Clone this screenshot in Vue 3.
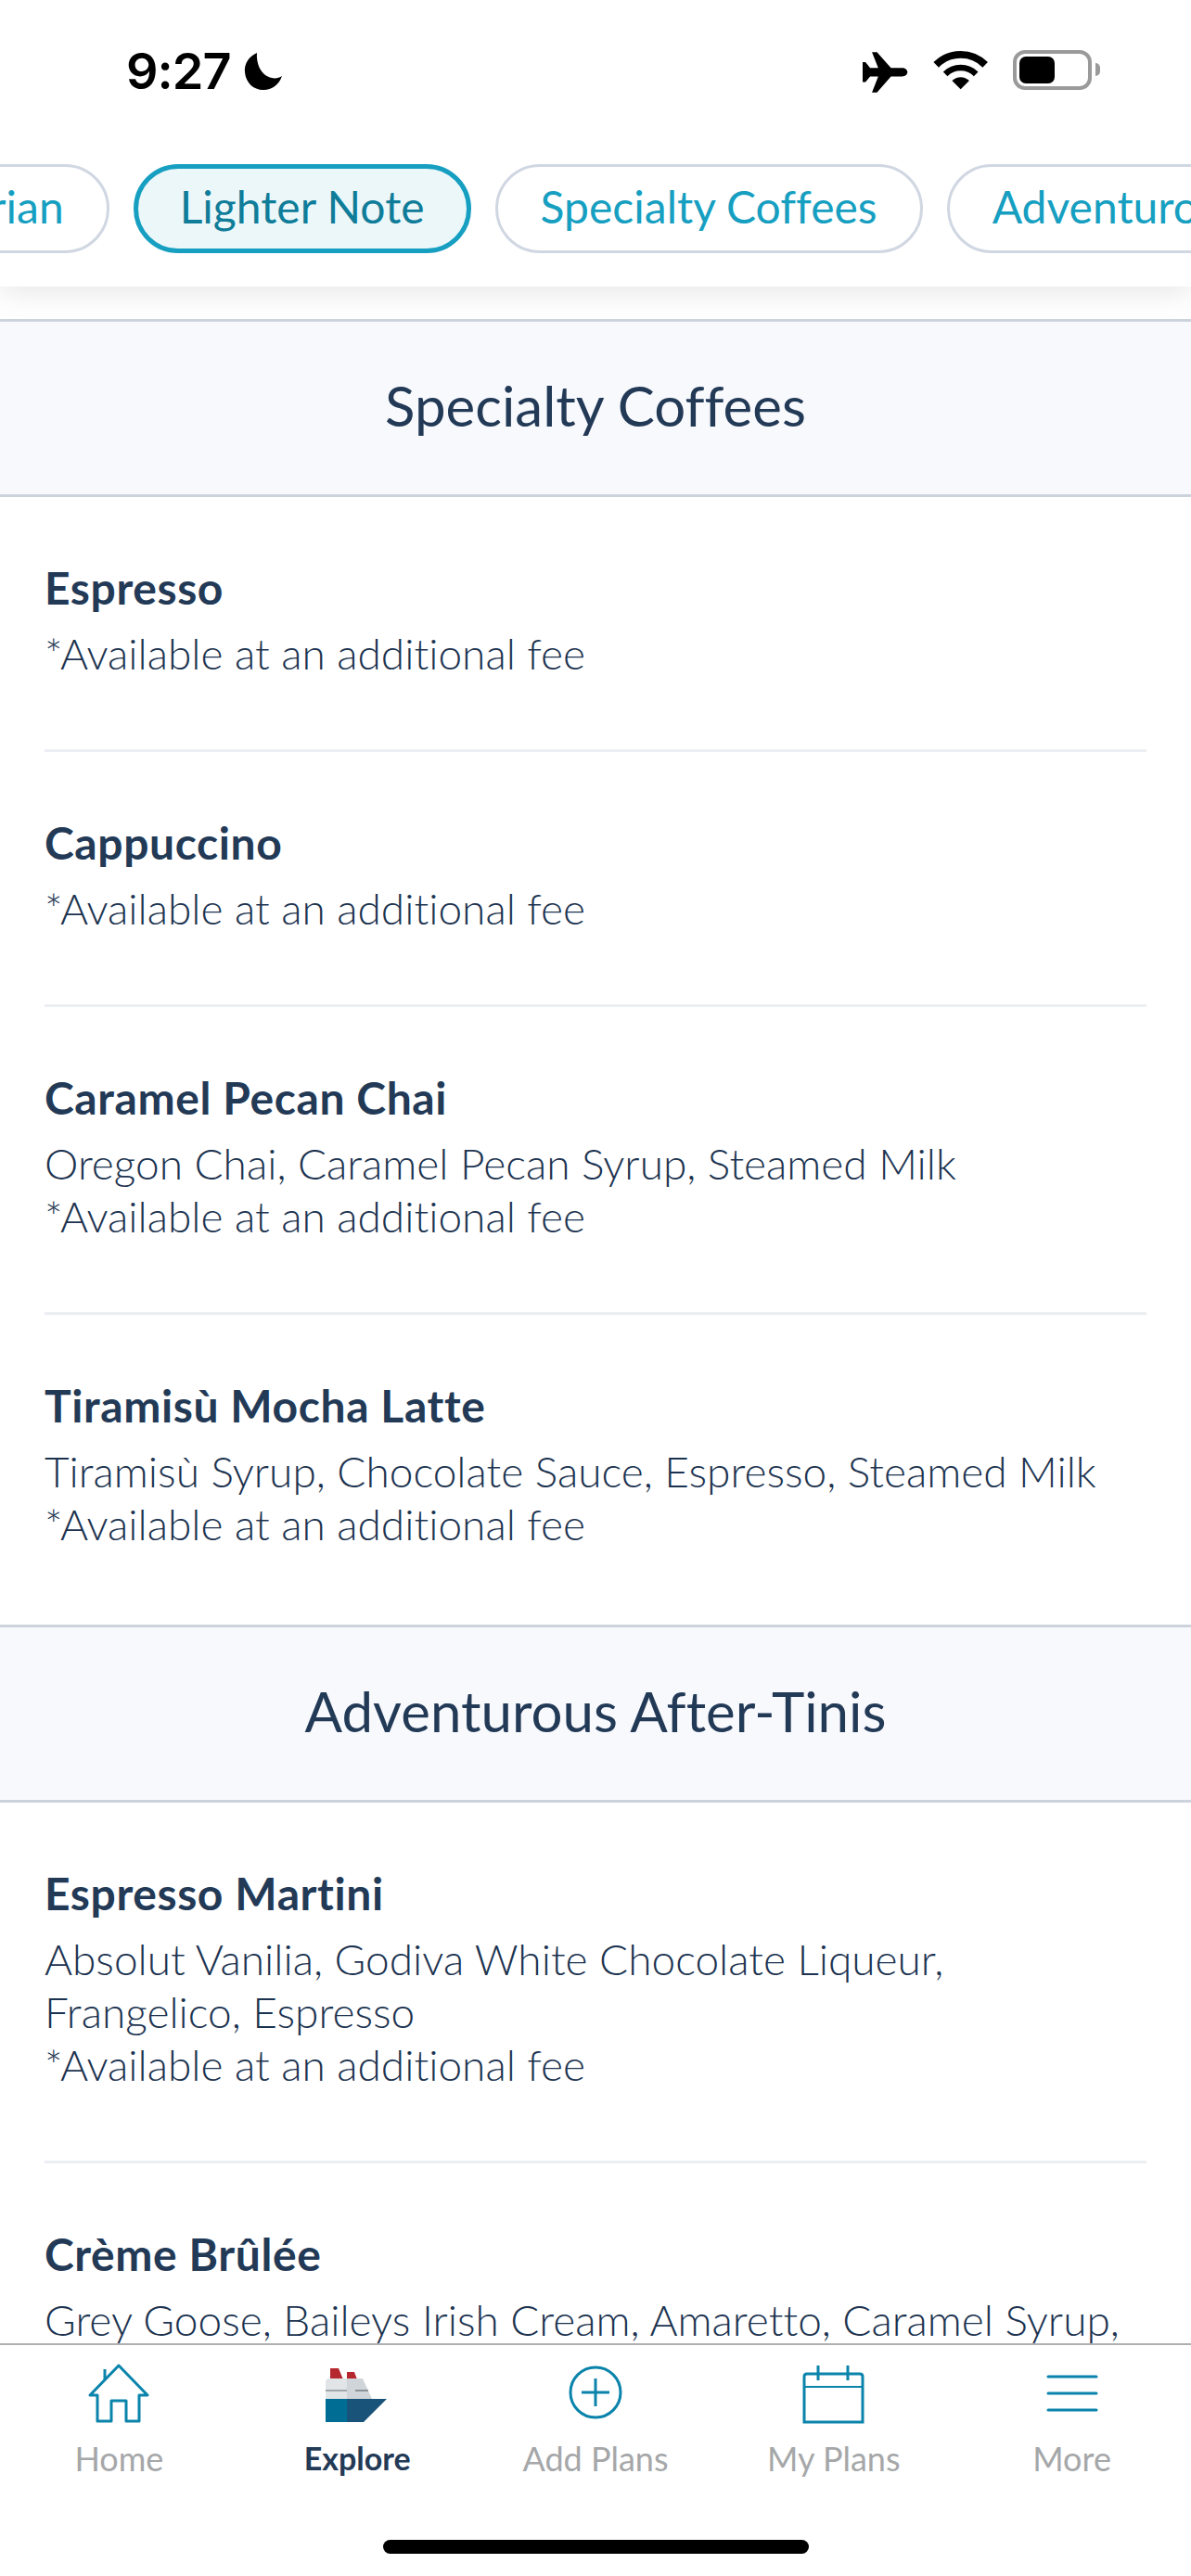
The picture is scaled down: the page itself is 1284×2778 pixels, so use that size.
<template>
  <div class="screen">
    <header class="top">
      <div class="status">
        <div class="clock">
          <span class="time">9:27</span>
          <svg class="moon" viewBox="0 0 42 42"><path d="M14 1C5 5 0 13 1 22c1 11 9 19 20 19 9 0 17-6 20-15-3 2-7 3-11 2C20 26 13 15 14 1z" fill="#000" /></svg>
        </div>
        <div class="status-icons">
          <svg class="plane" viewBox="385 100 155 140"><path d="M535 171C535 163 527 157 518 157H482L437 107H421L441 157H415L400 139H391V203H400L415 185H441L421 236H437L482 185H518C527 185 535 179 535 171Z" fill="#000" /></svg>
          <svg class="wifi" viewBox="620 100 180 130">
            <path d="M629 148A113 113 0 0 1 789 148" fill="none" stroke="#000" stroke-width="24" />
            <path d="M659 178A71 71 0 0 1 759 178" fill="none" stroke="#000" stroke-width="20" />
            <path d="M709 228L681 200A40 40 0 0 1 737 200Z" fill="#000" />
          </svg>
          <div class="battery"><div class="battery-fill"></div></div>
          <div class="battery-cap"></div>
        </div>
      </div>
      <nav class="chips">
        <button v-for="c in chips" :key="c" class="chip" :class="{ active: c === 'Lighter Note' }">{{ c }}</button>
      </nav>
    </header>

    <main class="menu">
      <section v-for="s in sections" :key="s.title">
        <h2 class="section-title">{{ s.title }}</h2>
        <div class="items">
          <div v-for="it in s.items" :key="it.name" class="item">
            <div class="item-name">{{ it.name }}</div>
            <div v-for="l in it.lines" :key="l" class="item-line">{{ l }}</div>
          </div>
        </div>
      </section>
    </main>

    <footer class="tabbar">
      <div class="tabs">
        <div class="tab">
          <svg class="tab-icon" viewBox="0 0 72 66" fill="none" stroke="#0a84ab" stroke-width="3">
            <path d="M13 62V34H5L36 2L67 34H58V62H44V40H28V62Z" stroke-linejoin="round" />
            <path d="M21 6V17" />
          </svg>
          <span class="tab-label">Home</span>
        </div>
        <div class="tab current">
          <svg class="tab-icon" viewBox="0 0 72 66">
            <path d="M7 5H16L21 17H7Z" fill="#b5282f" />
            <path d="M25 9H33L36 17H25Z" fill="#b5282f" />
            <path d="M2 38V20Q2 16 6 16H25V38Z" fill="#e1e5e8" />
            <path d="M25 16H42L52 38H25Z" fill="#d0d5d9" />
            <rect x="2" y="28" width="23" height="2" fill="#a0a8ad" />
            <rect x="34" y="28" width="14" height="2" fill="#8a9398" />
            <rect x="2" y="38" width="23" height="25" fill="#006d95" />
            <path d="M25 38H68L43 63H25Z" fill="#1a5379" />
          </svg>
          <span class="tab-label">Explore</span>
        </div>
        <div class="tab">
          <svg class="tab-icon" viewBox="0 0 72 66" fill="none" stroke="#0a84ab" stroke-width="3">
            <circle cx="36" cy="31" r="27" />
            <path d="M21 31H51M36 16V46" />
          </svg>
          <span class="tab-label">Add Plans</span>
        </div>
        <div class="tab">
          <svg class="tab-icon" viewBox="0 0 72 66" fill="none" stroke="#0a84ab" stroke-width="3">
            <path d="M4 63V14Q4 11 7 11H64Q67 11 67 14V63Z" />
            <path d="M4 25H67" stroke-width="2" />
            <path d="M19 2V18M51 2V18" />
          </svg>
          <span class="tab-label">My Plans</span>
        </div>
        <div class="tab">
          <svg class="tab-icon" viewBox="0 0 72 66" fill="none" stroke="#0a84ab" stroke-width="3" stroke-linecap="round">
            <path d="M10 14H62M10 32H62M10 50H62" />
          </svg>
          <span class="tab-label">More</span>
        </div>
      </div>
      <div class="home-bar"></div>
    </footer>
  </div>
</template>

<script setup>
const fee = '*Available at an additional fee'

const chips = ['Vegetarian', 'Lighter Note', 'Specialty Coffees', 'Adventurous After-Tinis']

const sections = [
  {
    title: 'Specialty Coffees',
    items: [
      { name: 'Espresso', lines: [fee] },
      { name: 'Cappuccino', lines: [fee] },
      { name: 'Caramel Pecan Chai', lines: ['Oregon Chai, Caramel Pecan Syrup, Steamed Milk', fee] },
      { name: 'Tiramisù Mocha Latte', lines: ['Tiramisù Syrup, Chocolate Sauce, Espresso, Steamed Milk', fee] },
    ],
  },
  {
    title: 'Adventurous After-Tinis',
    items: [
      { name: 'Espresso Martini', lines: ['Absolut Vanilia, Godiva White Chocolate Liqueur,', 'Frangelico, Espresso', fee] },
      { name: 'Crème Brûlée', lines: ['Grey Goose, Baileys Irish Cream, Amaretto, Caramel Syrup,', fee] },
    ],
  },
]
</script>

<style>
html, body {
  margin: 0;
  background: #fff;
}
</style>

<style scoped>
.screen {
  position: relative;
  width: 1284px;
  height: 2778px;
  overflow: hidden;
  background: #fff;
  font-family: Lato, "Noto Sans", sans-serif;
  font-variant-ligatures: none;
  color: #233a57;
}

.top {
  position: relative;
  z-index: 2;
  height: 309px;
  background: #fff;
  box-shadow: 0 6px 30px rgba(0, 0, 0, 0.1);
}

.status {
  height: 177px;
  display: flex;
  justify-content: space-between;
  align-items: flex-start;
  padding: 54px 98px 0 136px;
  box-sizing: border-box;
}

.clock {
  display: flex;
  align-items: center;
  gap: 14px;
}

.time {
  font-family: Inter, sans-serif;
  font-weight: 600;
  font-size: 54px;
  line-height: 46px;
  letter-spacing: -1px;
  color: #000;
}

.moon {
  width: 42px;
  height: 42px;
}

.status-icons {
  display: flex;
  align-items: flex-start;
}

.plane {
  width: 52px;
  height: 47px;
  margin-right: 26px;
}

.wifi {
  width: 60px;
  height: 43px;
  margin-right: 26px;
}

.battery {
  width: 85px;
  height: 43px;
  box-sizing: border-box;
  border: 4px solid #9a9a9a;
  border-radius: 13px;
  padding: 3px;
}

.battery-fill {
  width: 38px;
  height: 100%;
  background: #000;
  border-radius: 7px;
}

.battery-cap {
  width: 5px;
  height: 14px;
  margin: 14px 0 0 4px;
  background: #9a9a9a;
  border-radius: 0 7px 7px 0;
}

.chips {
  display: flex;
  gap: 26px;
  margin-left: -205px;
  white-space: nowrap;
}

.chip {
  flex: none;
  height: 96px;
  padding: 0 46px 6px;
  box-sizing: border-box;
  border: 3px solid #d0d7e2;
  border-radius: 48px;
  background: #fff;
  font-family: inherit;
  font-variant-ligatures: none;
  font-size: 48px;
  color: #169fc1;
}

.chip.active {
  padding: 0 45px 6px;
  border: 5px solid #169fc1;
  background: #ecf7fa;
  color: #0f7d99;
}

.menu {
  padding-top: 35px;
}

.section-title {
  margin: 0;
  height: 192px;
  padding-bottom: 6px;
  box-sizing: border-box;
  display: flex;
  align-items: center;
  justify-content: center;
  border-top: 3px solid #cdd3dd;
  border-bottom: 3px solid #cdd3dd;
  background: #f8f9fd;
  font-size: 60px;
  font-weight: 400;
}

.items {
  padding: 0 48px;
}

.item {
  padding: 69px 0 75px;
  border-bottom: 3px solid #ebeef2;
}

.item:last-child {
  padding-bottom: 77px;
  border-bottom-color: transparent;
}

.item-name {
  font-size: 48px;
  font-weight: 700;
  letter-spacing: 0.6px;
  line-height: 57px;
  margin-bottom: 14px;
}

.item-line {
  font-size: 46px;
  font-weight: 300;
  line-height: 57px;
  white-space: nowrap;
  color: #1c3350;
}

.tabbar {
  position: absolute;
  left: 0;
  right: 0;
  bottom: 0;
  z-index: 3;
  height: 251px;
  box-sizing: border-box;
  border-top: 2px solid #aeb0b3;
  background: #fff;
}

.tabs {
  display: flex;
  padding-top: 20px;
}

.tab {
  flex: 1;
  display: flex;
  flex-direction: column;
  align-items: center;
}

.tab-icon {
  width: 72px;
  height: 66px;
}

.tab-label {
  margin-top: 14px;
  font-size: 36px;
  line-height: 44px;
  color: #a5a7a9;
}

.current .tab-label {
  font-size: 34px;
  color: #233a57;
  font-weight: 700;
}

.home-bar {
  position: absolute;
  left: 413px;
  bottom: 24px;
  width: 459px;
  height: 15px;
  border-radius: 8px;
  background: #000;
}
</style>
